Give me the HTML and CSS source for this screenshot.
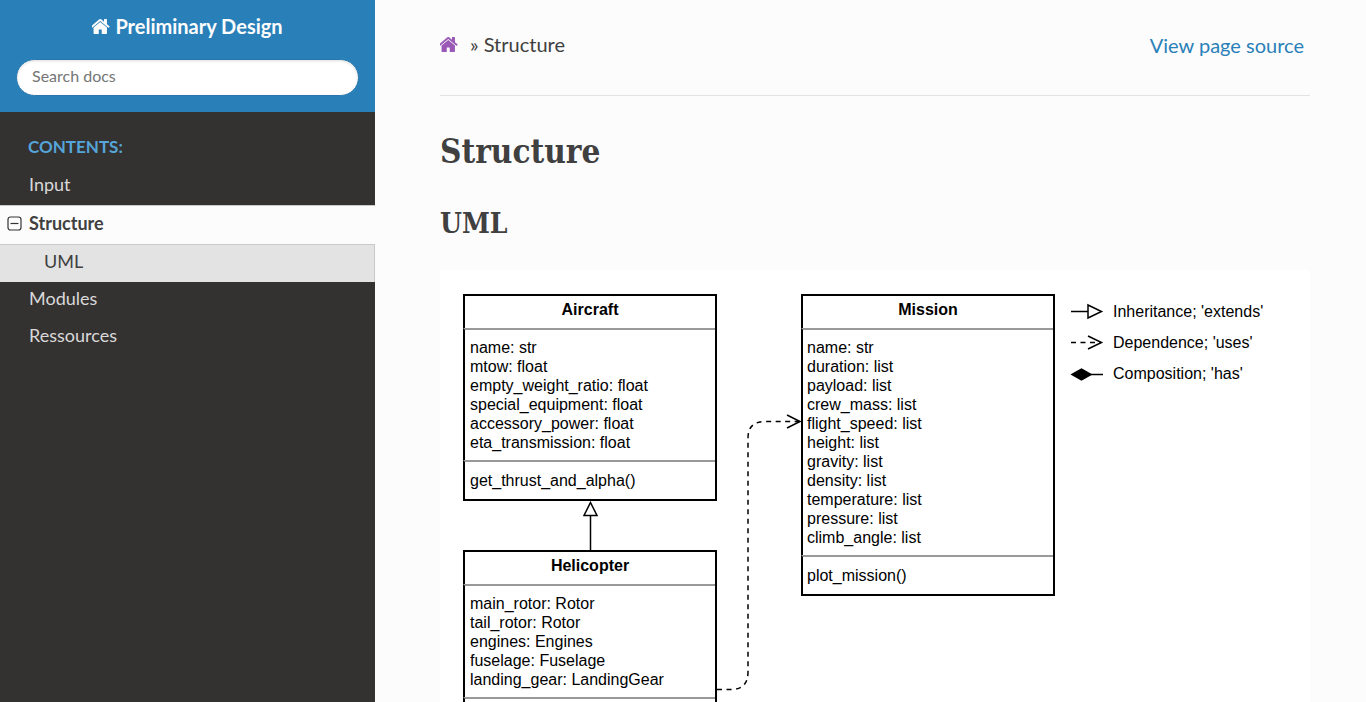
FILE: index.html
```html
<!DOCTYPE html>
<html lang="en">
<head>
<meta charset="utf-8">
<title>Structure — Preliminary Design</title>
<link rel="stylesheet" href="styles.css">
</head>
<body>
<svg class="defs" aria-hidden="true">
  <symbol id="home" viewBox="140 250 1512 1290">
    <path d="M1408 992v480q0 26-19 45t-45 19h-384v-384h-256v384h-384q-26 0-45-19t-19-45v-480q0-1 .5-3t.5-3l575-474 575 474q1 2 1 6zm223-69l-62 74q-8 9-21 11h-3q-13 0-21-7l-692-577-692 577q-12 8-24 7-13-2-21-11l-62-74q-8-10-7-23.5t11-21.5l719-599q32-26 76-26t76 26l244 204v-195q0-14 9-23t23-9h192q14 0 23 9t9 23v408l219 182q10 8 11 21.5t-7 23.5z"/>
  </symbol>
</svg>
<div class="layout">
  <nav class="sidebar">
    <div class="search-panel">
      <a class="brand" href="#"><svg class="home-icon" aria-hidden="true"><use href="#home"/></svg>Preliminary Design</a>
      <form><input class="search" type="text" placeholder="Search docs" aria-label="Search docs"></form>
    </div>
    <div class="menu">
      <p class="caption">Contents:</p>
      <ul class="toc">
        <li><a class="item" href="#">Input</a></li>
        <li>
          <div class="current">
            <button class="toggle" type="button" aria-label="Collapse Structure"><svg viewBox="0 0 15 15" aria-hidden="true"><rect x="1" y="1" width="13" height="13" rx="2.5"/><path d="M3.5 7.5h8"/></svg></button>
            <a class="item" href="#">Structure</a>
          </div>
          <ul class="toc"><li><a class="item sub" href="#uml">UML</a></li></ul>
        </li>
        <li><a class="item" href="#">Modules</a></li>
        <li><a class="item" href="#">Ressources</a></li>
      </ul>
    </div>
  </nav>
  <main class="content">
    <header class="crumbs">
      <div class="trail"><a class="home-link" href="#" aria-label="Home"><svg class="home-icon" aria-hidden="true"><use href="#home"/></svg></a><span>» Structure</span></div>
      <a class="source" href="#">View page source</a>
    </header>
    <h1>Structure</h1>
    <h2 id="uml">UML</h2>
    <div class="diagram">
      <svg class="wires" viewBox="0 0 870 560" width="870" height="560" aria-hidden="true">
        <path d="M150.5 280V246"/>
        <path d="M150.5 232.500L157 245.500H144Z"/>
        <path class="dashed" d="M277 419.500H291Q308 419.500 308 402V168Q308 151.500 325 151.500H360"/>
        <path d="M347 145L360 151.500L347 158"/>
        <path d="M631 41.500H648"/>
        <path d="M648 35L661.500 41.500L648 48Z"/>
        <path class="dashed" d="M631 72.500H661"/>
        <path d="M648 66L661.500 72.500L648 79"/>
        <path d="M650 104.500H663"/>
        <path class="solid" d="M632 104.500L641.500 99L651 104.500L641.500 110Z"/>
      </svg>
      <section class="node aircraft">
        <h3>Aircraft</h3>
        <ul class="fields"><li>name: str</li><li>mtow: float</li><li>empty_weight_ratio: float</li><li>special_equipment: float</li><li>accessory_power: float</li><li>eta_transmission: float</li></ul>
        <ul class="methods"><li>get_thrust_and_alpha()</li></ul>
      </section>
      <section class="node helicopter">
        <h3>Helicopter</h3>
        <ul class="fields"><li>main_rotor: Rotor</li><li>tail_rotor: Rotor</li><li>engines: Engines</li><li>fuselage: Fuselage</li><li>landing_gear: LandingGear</li></ul>
        <ul class="methods"></ul>
      </section>
      <section class="node mission">
        <h3>Mission</h3>
        <ul class="fields"><li>name: str</li><li>duration: list</li><li>payload: list</li><li>crew_mass: list</li><li>flight_speed: list</li><li>height: list</li><li>gravity: list</li><li>density: list</li><li>temperature: list</li><li>pressure: list</li><li>climb_angle: list</li></ul>
        <ul class="methods"><li>plot_mission()</li></ul>
      </section>
      <ul class="legend"><li>Inheritance; 'extends'</li><li>Dependence; 'uses'</li><li>Composition; 'has'</li></ul>
    </div>
  </main>
</div>
</body>
</html>
```
FILE: styles.css
```css
* { box-sizing: border-box; }
body {
  margin: 0;
  font-family: Lato, "Noto Sans", sans-serif;
  font-size: 20px;
  line-height: 30px;
  color: #404040;
  background: #fcfcfc;
}
a { color: inherit; text-decoration: none; }
ul { list-style: none; margin: 0; padding: 0; }
.defs { display: none; }
.home-icon { width: 18px; height: 15px; fill: currentColor; }

.layout { display: flex; height: 100vh; }
.sidebar { flex: 0 0 375px; background: #343131; }
.search-panel {
  display: flex;
  flex-direction: column;
  gap: 18px;
  padding: 11px 16px 16px;
  background: #2980b9;
}
.brand {
  display: flex;
  align-items: center;
  justify-content: center;
  gap: 5px;
  color: #fcfcfc;
  font-weight: bold;
}
.search {
  display: block;
  width: 100%;
  height: 37px;
  padding: 0 15px 4px;
  border: 1px solid #2777ad;
  border-radius: 50px;
  background: #fff;
  box-shadow: inset 0 1px 3px #ddd;
  font: 16px Lato, sans-serif;
}
.search::placeholder { color: #757575; opacity: 1; }
.menu { padding-top: 15px; }
.caption {
  margin: 0;
  padding: 0 28px 1px;
  font-size: 17px;
  font-weight: bold;
  line-height: 40px;
  text-transform: uppercase;
  color: #55a5d9;
}
.item {
  display: block;
  padding: 0 0 4px 29px;
  font-size: 18px;
  line-height: 33px;
  color: #d9d9d9;
}
.current {
  display: flex;
  align-items: center;
  padding: 0 0 4px 7px;
  border-top: 1px solid #c9c9c9;
  border-bottom: 1px solid #c9c9c9;
  background: #fcfcfc;
}
.current .item {
  flex: 1;
  padding: 0 0 0 7px;
  line-height: 34px;
  color: #404040;
  font-weight: bold;
}
.toggle {
  width: 15px;
  height: 15px;
  padding: 0;
  border: 0;
  background: none;
}
.toggle svg { display: block; fill: none; stroke: #333; stroke-width: 1.2; }
.sub {
  padding-left: 44px;
  border-right: 1px solid #c9c9c9;
  background: #e3e3e3;
  color: #404040;
}

.content {
  flex: 1;
  min-width: 0;
  padding: 30px 56px 0 65px;
  overflow-y: auto;
  scrollbar-width: none;
}
.crumbs {
  display: flex;
  justify-content: space-between;
  padding-bottom: 35px;
  border-bottom: 1px solid #e1e4e5;
}
.trail { display: flex; gap: 12px; line-height: 28px; }
.home-link { color: #9b59b6; }
.source { padding-right: 6px; color: #2980b9; }
h1, h2 {
  margin: 0;
  font-family: "Roboto Slab", "DejaVu Serif Condensed", "DejaVu Serif", serif;
  font-weight: bold;
}
h1 { padding-top: 32px; font-size: 33px; line-height: 48px; }
h2 { padding: 28px 0 26px; font-size: 28px; line-height: 40px; }

.diagram {
  position: relative;
  height: 560px;
  background: #fff;
  color: #000;
  font: 16px/19px "Liberation Sans", Arial, sans-serif;
}
.wires { position: absolute; top: 0; left: 0; fill: none; stroke: #000; stroke-width: 1.5; }
.wires .dashed { stroke-dasharray: 5 4.5; }
.wires .solid { fill: #000; }
.node { position: absolute; width: 254px; border: 2px solid #000; }
.aircraft { left: 23px; top: 24px; }
.helicopter { left: 23px; top: 280px; }
.mission { left: 361px; top: 24px; }
.node h3 { margin: 0; font-size: 16px; line-height: 28px; padding-bottom: 4px; text-align: center; }
.fields, .methods {
  margin-left: -2px;
  border-top: 2px solid #999;
  border-left: 2px solid #000;
}
.fields { padding: 8px 5px; }
.methods { padding: 9px 5px; }
.mission .fields, .mission .methods { padding-left: 4px; }
.legend {
  position: absolute;
  left: 673px;
  top: 32px;
  display: grid;
  gap: 12px;
}
```
